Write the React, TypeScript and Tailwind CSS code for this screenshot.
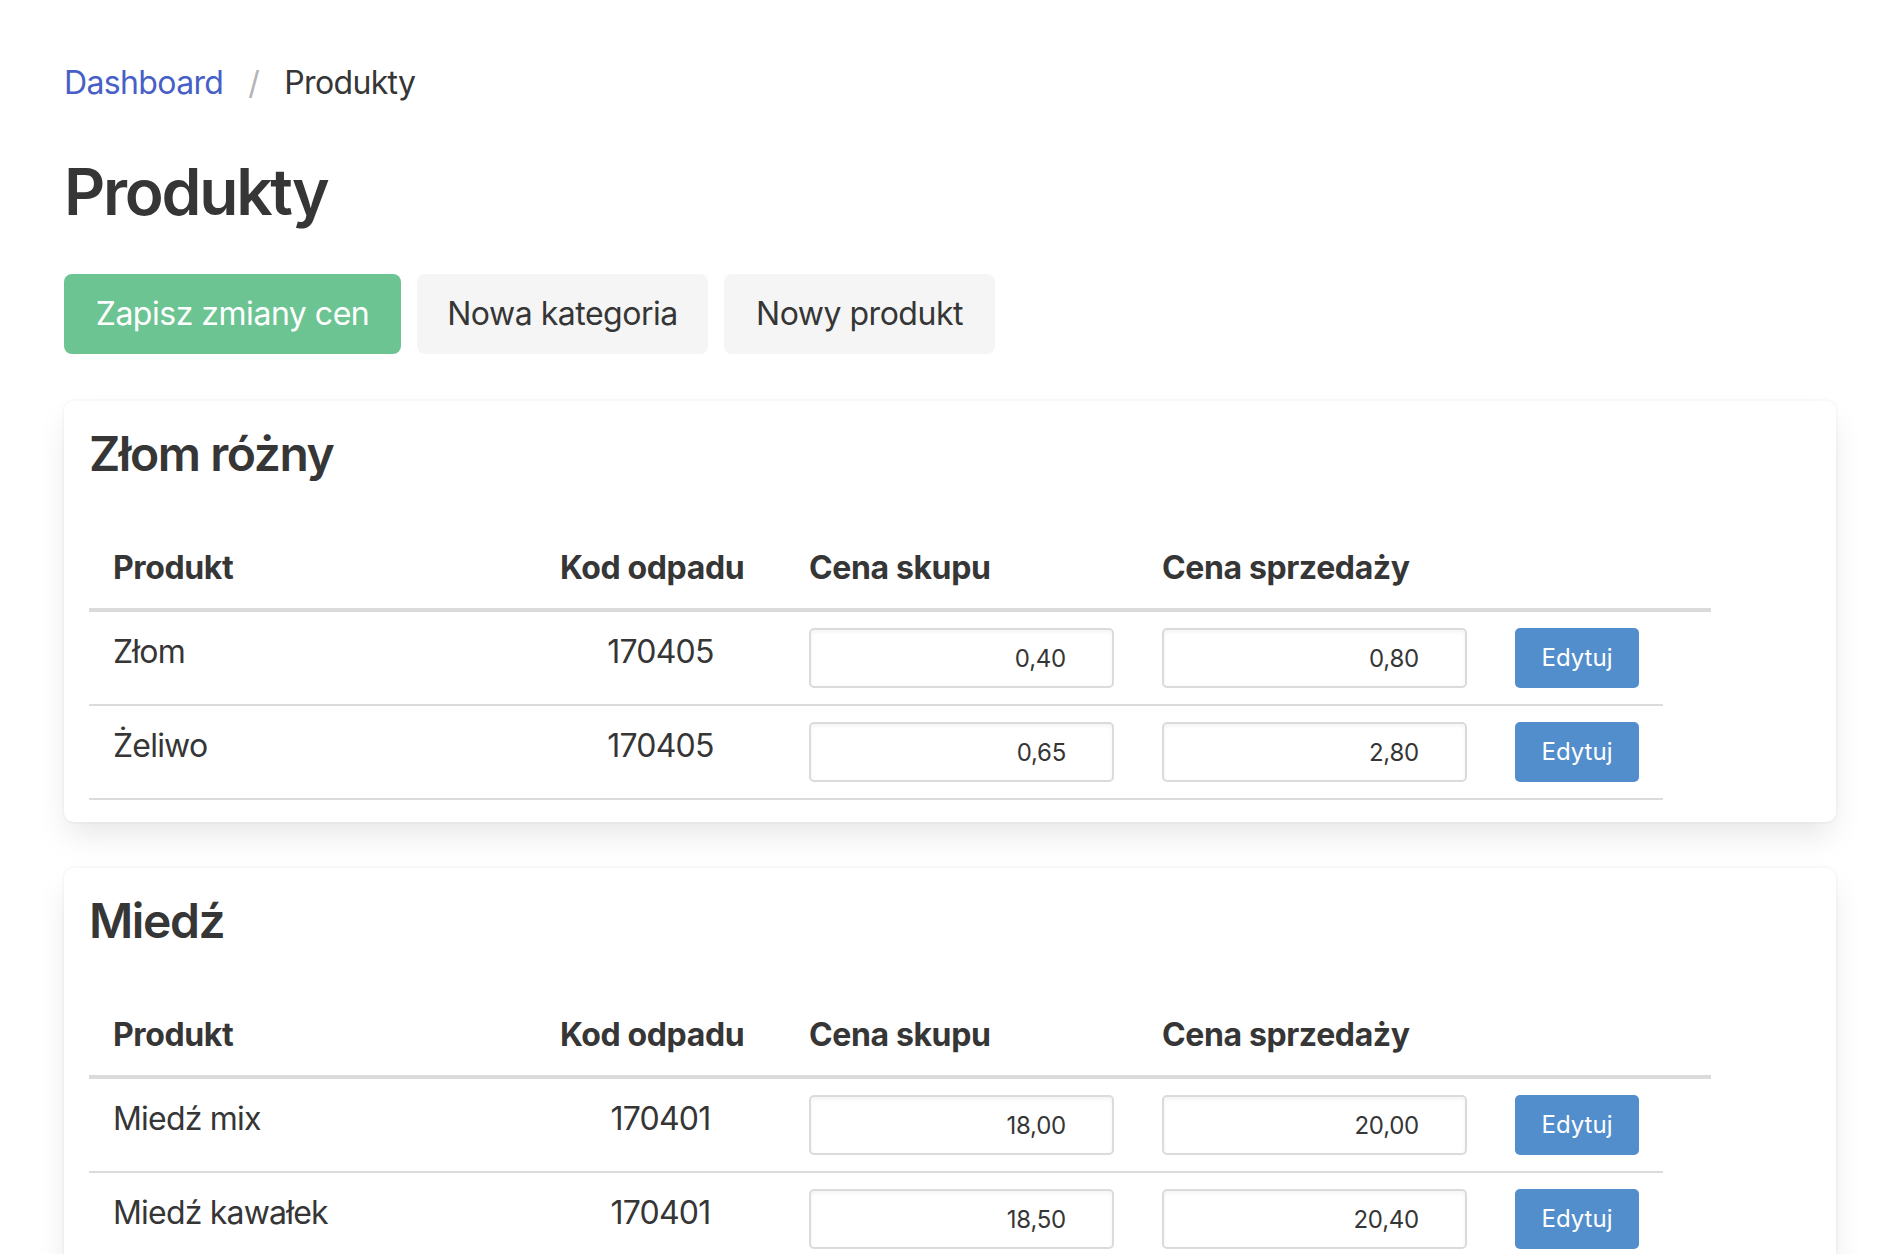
import React from "react";

type Product = {
  name: string;
  code: string;
  buy: string;
  sell: string;
};

type Category = {
  title: string;
  products: Product[];
};

const categories: Category[] = [
  {
    title: "Złom różny",
    products: [
      { name: "Złom", code: "170405", buy: "0,40", sell: "0,80" },
      { name: "Żeliwo", code: "170405", buy: "0,65", sell: "2,80" },
    ],
  },
  {
    title: "Miedź",
    products: [
      { name: "Miedź mix", code: "170401", buy: "18,00", sell: "20,00" },
      { name: "Miedź kawałek", code: "170401", buy: "18,50", sell: "20,40" },
    ],
  },
];

const PriceInput = ({ value }: { value: string }) => {
  return (
    <input
      type="text"
      defaultValue={value}
      className="block w-[305px] h-[60px] rounded-[5px] border-2 border-[#dbdbdb] bg-white pr-[46px] text-right text-[24px] tracking-[-0.01em] text-[#363636] shadow-[inset_0_2px_4px_rgba(10,10,10,0.05)] outline-none"
    />
  );
};

const CategoryBox = ({ category }: { category: Category }) => {
  return (
    <div className="bg-white rounded-[10px] pl-[25px] pr-[25px] pt-[26px] pb-[22px] shadow-[0_16px_32px_-4px_rgba(10,10,10,0.1),0_0_0_2px_rgba(10,10,10,0.02)]">
      <h2 className="text-[48px] leading-[54px] font-semibold tracking-[-0.03em] text-[#363636] mb-[47px]">
        {category.title}
      </h2>
      <table className="table-fixed border-separate border-spacing-0 w-[1622px] text-[32px] leading-[48px] tracking-[-0.025em] text-[#363636]">
        <colgroup>
          <col className="w-[447px]" />
          <col className="w-[249px]" />
          <col className="w-[353px]" />
          <col className="w-[353px]" />
          <col className="w-[172px]" />
          <col className="w-[48px]" />
        </colgroup>
        <thead className="tracking-[-0.012em]">
          <tr>
            <th className="text-left font-bold px-6 py-4 border-b-4 border-[#dbdbdb]">Produkt</th>
            <th className="text-left font-bold px-6 py-4 border-b-4 border-[#dbdbdb]">Kod odpadu</th>
            <th className="text-left font-bold px-6 py-4 border-b-4 border-[#dbdbdb]">Cena skupu</th>
            <th className="text-left font-bold px-6 py-4 border-b-4 border-[#dbdbdb]">Cena sprzedaży</th>
            <th className="px-6 py-4 border-b-4 border-[#dbdbdb]"></th>
            <th className="px-6 py-4 border-b-4 border-[#dbdbdb]"></th>
          </tr>
        </thead>
        <tbody>
          {category.products.map((p) => (
            <tr key={p.name}>
              <td className="align-top px-6 py-4 border-b-2 border-[#dbdbdb]">{p.name}</td>
              <td className="align-top text-center px-6 py-4 border-b-2 border-[#dbdbdb]">{p.code}</td>
              <td className="align-top px-6 py-4 border-b-2 border-[#dbdbdb]">
                <PriceInput value={p.buy} />
              </td>
              <td className="align-top px-6 py-4 border-b-2 border-[#dbdbdb]">
                <PriceInput value={p.sell} />
              </td>
              <td className="align-top px-6 py-4 border-b-2 border-[#dbdbdb]">
                <button className="flex items-center justify-center w-[124px] h-[60px] rounded-[5px] bg-[#528ecc] text-white text-[24px] tracking-normal">
                  Edytuj
                </button>
              </td>
            </tr>
          ))}
        </tbody>
      </table>
    </div>
  );
};

export default function App() {
  return (
    <div className="min-h-screen bg-white pl-16 pr-[68px] pt-[59px] pb-10 font-['Inter',sans-serif] text-[#363636]">
      <nav className="flex items-center text-[32px] leading-[48px] tracking-[-0.02em]">
        <a href="#" className="text-[#485fc7]">Dashboard</a>
        <span className="text-[#b5b5b5] px-[25px]">/</span>
        <span className="text-[#363636]">Produkty</span>
      </nav>

      <h1 className="mt-[49px] text-[64px] leading-[72px] font-semibold tracking-[-0.035em] text-[#363636]">
        Produkty
      </h1>

      <div className="flex gap-4 mt-[46px] text-[32px] tracking-[-0.015em]">
        <button className="w-[337px] h-[80px] rounded-[8px] bg-[#6cc493] text-white">
          Zapisz zmiany cen
        </button>
        <button className="w-[291px] h-[80px] rounded-[8px] bg-[#f5f5f5] text-[#363636]">
          Nowa kategoria
        </button>
        <button className="w-[271px] h-[80px] rounded-[8px] bg-[#f5f5f5] text-[#363636]">
          Nowy produkt
        </button>
      </div>

      <div className="mt-[47px] flex flex-col gap-[46px]">
        {categories.map((c) => (
          <CategoryBox key={c.title} category={c} />
        ))}
      </div>
    </div>
  );
}
